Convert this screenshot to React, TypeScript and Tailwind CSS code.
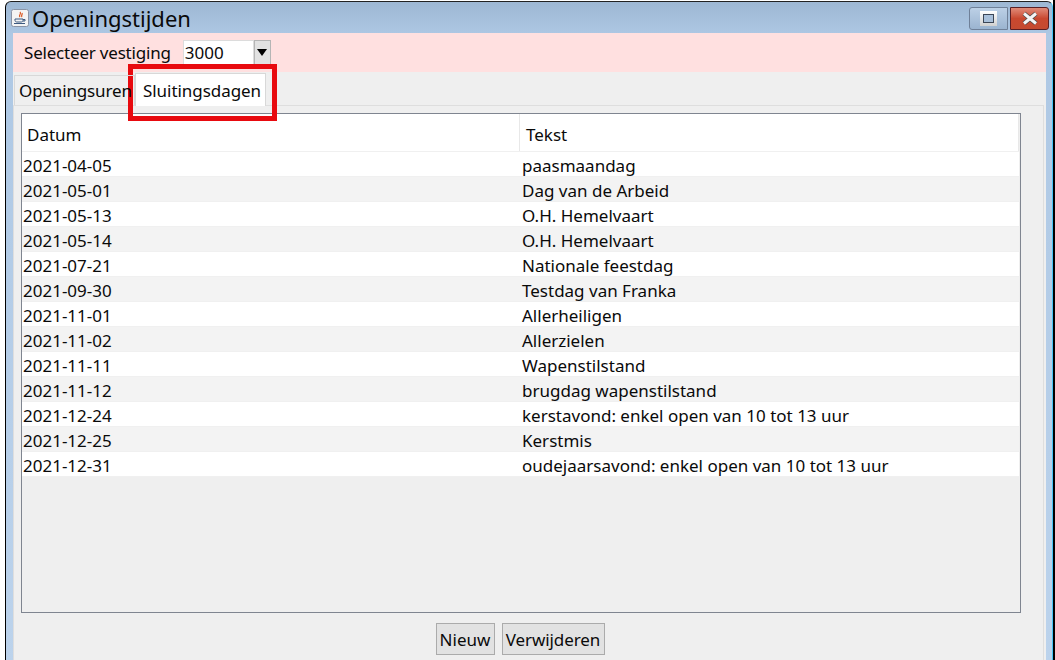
const rows: [string, string][] = [
  ['2021-04-05', 'paasmaandag'],
  ['2021-05-01', 'Dag van de Arbeid'],
  ['2021-05-13', 'O.H. Hemelvaart'],
  ['2021-05-14', 'O.H. Hemelvaart'],
  ['2021-07-21', 'Nationale feestdag'],
  ['2021-09-30', 'Testdag van Franka'],
  ['2021-11-01', 'Allerheiligen'],
  ['2021-11-02', 'Allerzielen'],
  ['2021-11-11', 'Wapenstilstand'],
  ['2021-11-12', 'brugdag wapenstilstand'],
  ['2021-12-24', 'kerstavond: enkel open van 10 tot 13 uur'],
  ['2021-12-25', 'Kerstmis'],
  ['2021-12-31', 'oudejaarsavond: enkel open van 10 tot 13 uur'],
];

const JavaIcon = () => (
  <svg width="18" height="18" viewBox="0 0 18 18" className="-ml-[2px] shrink-0">
    <rect x="0.5" y="0.5" width="17" height="17" rx="2" fill="#f4f4f4" stroke="#8a94a6" />
    <path d="M9 3c2 2-2 3 0 5M11 4c1 1.500-1.500 2.500 0 4" stroke="#d9541e" strokeWidth="1.200" fill="none" />
    <path d="M4 10h8v1.500c0 1-1 1.500-2 1.500H6c-1 0-2-.5-2-1.500zM12 10.500h2v1.500h-2M3 14.500h11" stroke="#3d5a80" strokeWidth="1" fill="none" />
  </svg>
);

export default function App() {
  return (
    <div className="relative h-[660px] w-[1055px] overflow-hidden border-r-2 border-r-black bg-white pl-[5px] pt-[1px] font-['Noto_Sans',sans-serif] text-[17px] text-[#0a0a0a]">
      <div className="flex h-[670px] flex-col rounded-t-[6px] border-l border-r border-t border-l-black border-r-[#45c4f5] border-t-[#222] bg-gradient-to-b from-[#9db7d3] via-[#aec8e4] via-[5%] to-[#bcd3ec] pl-[7px] pr-[6px]">
        {/* Title bar */}
        <div className="flex h-[31px] shrink-0 items-center">
          <JavaIcon />
          <span className="ml-[3px] text-[22px] leading-none">Openingstijden</span>
          <div className="-mr-[3px] ml-auto flex translate-y-[1px] items-start">
            <div className="flex h-[23px] w-[39px] items-center justify-center rounded-l-[3px] border border-[#6f8098] bg-gradient-to-b from-[#bcd0e6] to-[#9bb4d0]">
              <div className="flex h-[15px] w-[17px] items-center justify-center bg-gradient-to-b from-white to-[#d0d0d0]">
                <div className="h-[9px] w-[11px] border border-[#3c4656] bg-[#a9c0da]" />
              </div>
            </div>
            <div className="ml-[2px] flex h-[23px] w-[39px] items-center justify-center rounded-r-[3px] border border-[#5a1f24] bg-gradient-to-b from-[#e08a78] via-[#c9482f] to-[#c44a30]">
              <svg width="18" height="15" viewBox="0 0 18 15">
                <path d="M3 2.500l12 10M15 2.500L3 12.500" stroke="#4a4a4a" strokeWidth="4.500" />
                <path d="M3 2.500l12 10M15 2.500L3 12.500" stroke="#f5f5f5" strokeWidth="3" />
              </svg>
            </div>
          </div>
        </div>

        {/* Content */}
        <div className="flex min-h-0 flex-1 flex-col bg-[#efefef]">
          <div className="flex h-[39px] shrink-0 items-center bg-[#ffe0e0] pl-[11px]">
            <span className="tracking-[-0.2px]">Selecteer vestiging</span>
            <div className="ml-[12px] flex h-[26px] w-[71px] items-center border border-[#dcdcdc] bg-white pl-[1px]">3000</div>
            <div className="flex h-[26px] w-[17px] items-center justify-center border border-[#b5b5b5] bg-[#e2e2e2]">
              <div className="h-0 w-0 border-x-[5px] border-t-[7px] border-x-transparent border-t-black" />
            </div>
          </div>

          {/* Tabs */}
          <div className="relative z-10 flex h-[33px] shrink-0 items-end pl-[1px]">
            <div className="flex h-[30px] w-[121px] items-center border-x border-t border-[#d8d8d8] pl-[4px] pt-[1px] tracking-[-0.15px]">Openingsuren</div>
            <div className="-mb-[1px] flex h-[33px] w-[131px] items-center border-x border-t border-[#d8d8d8] bg-white pl-[7px] pt-[1px] tracking-[-0.05px]">Sluitingsdagen</div>
          </div>

          {/* Tab panel */}
          <div className="mr-[2px] flex h-[556px] shrink-0 flex-col border border-[#dedede] px-[7px] pt-[7px]">
            <div className="flex h-[500px] w-[1000px] shrink-0 flex-col border border-[#7f8590] pr-[1px]">
              <div className="flex h-[38px] shrink-0 border-b border-[#f0f0f0] bg-white">
                <div className="flex w-[498px] items-center border-r border-[#e8e8e8] pl-[5px] pt-[4px]">Datum</div>
                <div className="flex flex-1 items-center border-r border-[#e8e8e8] pl-[6px] pt-[4px]">Tekst</div>
              </div>
              {rows.map(([date, text], i) => (
                <div key={date} className={`flex h-[25px] shrink-0 items-center border-b border-[#f0f0f0] pt-[4px] ${i % 2 === 0 ? 'bg-white' : 'bg-[#f3f3f3]'}`}>
                  <div className="w-[498px] pl-[1px]">{date}</div>
                  <div className="pl-[2px]">{text}</div>
                </div>
              ))}
            </div>
            <div className="flex w-[998px] justify-center gap-[7px] pt-[10px]">
              <div className="flex h-[32px] w-[59px] items-center justify-center border border-[#ababab] bg-[#e2e2e2] pt-[2px]">Nieuw</div>
              <div className="flex h-[32px] w-[103px] items-center justify-center border border-[#ababab] bg-[#e2e2e2] pt-[2px] tracking-[-0.1px]">Verwijderen</div>
            </div>
          </div>
        </div>
      </div>

      {/* Red annotation */}
      <div className="absolute left-[128px] top-[64px] h-[57px] w-[149px] border-[5px] border-[#e80a0f]" />
    </div>
  );
}
